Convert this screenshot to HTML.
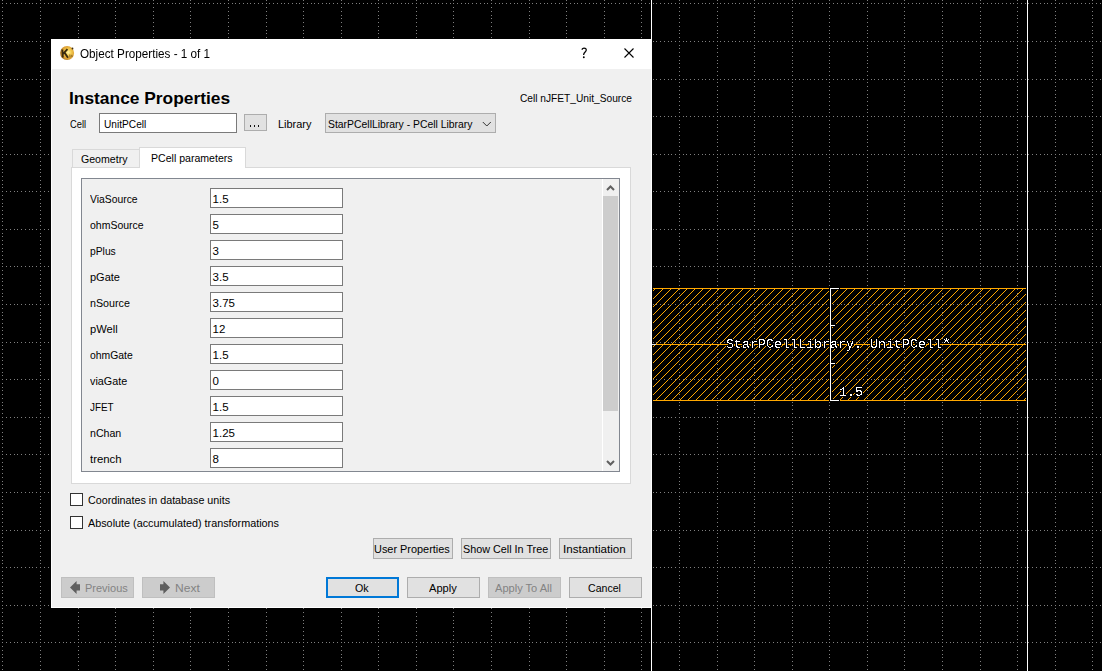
<!DOCTYPE html>
<html><head><meta charset="utf-8">
<style>
html,body{margin:0;padding:0;width:1102px;height:671px;overflow:hidden;background:#000;}
body{position:relative;font-family:"Liberation Sans",sans-serif;}
#cv{position:absolute;left:0;top:0;}
.a{position:absolute;box-sizing:border-box;}
.t{position:absolute;white-space:pre;font-size:12px;line-height:1;color:#000;transform-origin:0 0;}
.v{position:absolute;white-space:pre;font-size:11.5px;line-height:1;color:#000;}
.fld{position:absolute;box-sizing:border-box;background:#fff;border:1px solid #7a7a7a;}
.btn{position:absolute;box-sizing:border-box;background:#e1e1e1;border:1px solid #adadad;}
.dis{position:absolute;box-sizing:border-box;background:#cccccc;border:1px solid #bfbfbf;}
.cb{position:absolute;box-sizing:border-box;background:#fff;border:1px solid #333;width:13px;height:13px;}
</style></head><body>
<div class="a" style="left:0;top:0;width:1102px;height:671px;background-image:repeating-linear-gradient(90deg,transparent 0,transparent 2.9px,rgba(128,128,128,.27) 2.9px,rgba(128,128,128,.27) 3.9px,transparent 3.9px,transparent 37.585px),repeating-linear-gradient(180deg,transparent 0,transparent 3.8px,rgba(128,128,128,.27) 3.8px,rgba(128,128,128,.27) 4.8px,transparent 4.8px,transparent 37.585px);"></div>
<div class="a" style="left:653px;top:288px;width:373px;height:113px;border-top:1px solid #ffa800;border-bottom:1px solid #ffa800;background-image:repeating-linear-gradient(135deg,rgba(255,168,0,.9) 0,rgba(255,168,0,.9) 1px,transparent 1px,transparent 5.657px);"></div>
<div class="a" style="left:653px;top:344px;width:373px;height:1px;background:#ffa800"></div>
<div class="a" style="left:651px;top:0;width:1px;height:671px;background:#fff"></div>
<div class="a" style="left:1027px;top:0;width:1px;height:671px;background:#fff"></div>
<div class="a" style="left:829px;top:287px;width:3px;height:115px;background:#000"></div>
<div class="a" style="left:830px;top:288px;width:1px;height:113px;background:#fff"></div>
<div class="a" style="left:830px;top:288px;width:9px;height:1px;background:#fff"></div>
<div class="a" style="left:830px;top:400px;width:9px;height:1px;background:#fff"></div>
<div class="a" style="left:830px;top:325px;width:5px;height:1px;background:#fff"></div>
<div class="a" style="left:830px;top:363px;width:5px;height:1px;background:#fff"></div>
<span class="a" style="left:726px;top:336px;font:13.33px 'Liberation Mono',monospace;line-height:1;color:#fff;white-space:pre;text-shadow:0 0 1px #000,0 0 1px #000">StarPCellLibrary. UnitPCell*</span>
<span class="a" style="left:839px;top:384px;font:13.33px 'Liberation Mono',monospace;line-height:1;color:#fff;white-space:pre;text-shadow:0 0 1px #000,0 0 1px #000">1.5</span>
<canvas id="cv" width="1102" height="671"></canvas>

<div class="a" style="left:51px;top:39px;width:601px;height:569px;background:#fff;"></div>
<div class="a" style="left:52px;top:69px;width:599px;height:538px;background:#f0f0f0;"></div>
<!-- icon -->
<svg class="a" style="left:59px;top:45px" width="16" height="16" viewBox="0 0 16 16">
<defs><radialGradient id="gd" cx="0.58" cy="0.45" r="0.6"><stop offset="0" stop-color="#fff7b0"/><stop offset="0.35" stop-color="#f5cc50"/><stop offset="0.8" stop-color="#d99a30"/><stop offset="1" stop-color="#a06a20"/></radialGradient></defs>
<circle cx="8.1" cy="8" r="7" fill="url(#gd)"/>
<path d="M3.3 4.5 L3.8 12.5 M4 8.8 L8.5 4.2 M5.8 8 L9 12.8" stroke="#3a2a10" stroke-width="1.9" fill="none"/>
<path d="M10.8 9.5 L11 12.5 M12.8 9.8 L13 12" stroke="#5a4010" stroke-width="0.9" fill="none" opacity="0.8"/>
<circle cx="13.5" cy="3.5" r="0.9" fill="#3a2a10"/>
</svg>
<!-- ? and X -->
<svg class="a" style="left:620px;top:44px" width="18" height="18" viewBox="0 0 18 18"><path d="M4.5 4.5 L13.5 13.5 M13.5 4.5 L4.5 13.5" stroke="#000" stroke-width="1.1" fill="none"/></svg>
<svg class="a" style="left:0;top:0" width="600" height="70"><path d="M581.8 49.6 C582.5 48.4 584 48 585.2 48.4 C586.6 48.9 586.5 50.6 585.5 51.6 C584.5 52.5 583.6 53.2 583.6 55" stroke="#000" stroke-width="1.25" fill="none"/><circle cx="583.8" cy="57.3" r="0.95" fill="#000"/></svg>
<!-- cell input -->
<div class="fld" style="left:99px;top:113px;width:138px;height:20px;"></div>
<div class="btn" style="left:244px;top:114px;width:23px;height:17px;"></div>
<div class="a" style="left:250px;top:125px;width:1px;height:2px;background:#111"></div><div class="a" style="left:254px;top:125px;width:1px;height:2px;background:#111"></div><div class="a" style="left:258px;top:125px;width:1px;height:2px;background:#111"></div>
<div class="btn" style="left:325px;top:113px;width:171px;height:20px;"></div>
<svg class="a" style="left:482px;top:120px" width="10" height="8" viewBox="0 0 10 8"><path d="M0.8 2 L4.8 6 L8.8 2" stroke="#333" stroke-width="1" fill="none"/></svg>
<!-- tabs -->
<div class="a" style="left:72px;top:149px;width:68px;height:19px;background:#f0f0f0;border:1px solid #d9d9d9;"></div>
<div class="a" style="left:71px;top:167px;width:560px;height:317px;background:#fff;border:1px solid #d9d9d9;"></div>
<div class="a" style="left:139px;top:147px;width:107px;height:21px;background:#fff;border:1px solid #d9d9d9;border-bottom:none;"></div>
<!-- scroll frame -->
<div class="a" style="left:81px;top:178px;width:539px;height:294px;background:#f0f0f0;border:1px solid #828790;"></div>
<div class="a" style="left:602px;top:179px;width:1px;height:292px;background:#fff;"></div>
<div class="a" style="left:603px;top:196px;width:15px;height:215px;background:#cdcdcd;"></div>
<svg class="a" style="left:603px;top:180px" width="15" height="17" viewBox="0 0 15 17"><path d="M4 10 L7.5 6.5 L11 10" stroke="#606060" stroke-width="2" fill="none"/></svg>
<svg class="a" style="left:603px;top:454px" width="15" height="17" viewBox="0 0 15 17"><path d="M4 7 L7.5 10.5 L11 7" stroke="#606060" stroke-width="2" fill="none"/></svg>

<div class="fld" style="left:210px;top:188px;width:133px;height:20px;"></div>
<span class="v" style="left:212.6px;top:194px;">1.5</span>
<div class="fld" style="left:210px;top:214px;width:133px;height:20px;"></div>
<span class="v" style="left:212.6px;top:220px;">5</span>
<div class="fld" style="left:210px;top:240px;width:133px;height:20px;"></div>
<span class="v" style="left:212.6px;top:246px;">3</span>
<div class="fld" style="left:210px;top:266px;width:133px;height:20px;"></div>
<span class="v" style="left:212.6px;top:272px;">3.5</span>
<div class="fld" style="left:210px;top:292px;width:133px;height:20px;"></div>
<span class="v" style="left:212.6px;top:298px;">3.75</span>
<div class="fld" style="left:210px;top:318px;width:133px;height:20px;"></div>
<span class="v" style="left:212.6px;top:324px;">12</span>
<div class="fld" style="left:210px;top:344px;width:133px;height:20px;"></div>
<span class="v" style="left:212.6px;top:350px;">1.5</span>
<div class="fld" style="left:210px;top:370px;width:133px;height:20px;"></div>
<span class="v" style="left:212.6px;top:376px;">0</span>
<div class="fld" style="left:210px;top:396px;width:133px;height:20px;"></div>
<span class="v" style="left:212.6px;top:402px;">1.5</span>
<div class="fld" style="left:210px;top:422px;width:133px;height:20px;"></div>
<span class="v" style="left:212.6px;top:428px;">1.25</span>
<div class="fld" style="left:210px;top:448px;width:133px;height:20px;"></div>
<span class="v" style="left:212.6px;top:454px;">8</span>
<div class="cb" style="left:70px;top:493px;"></div>
<div class="cb" style="left:70px;top:516px;"></div>
<div class="btn" style="left:373px;top:538px;width:80px;height:21px;"></div>
<div class="btn" style="left:461px;top:538px;width:90px;height:21px;"></div>
<div class="btn" style="left:559px;top:538px;width:73px;height:21px;"></div>
<div class="dis" style="left:61px;top:577px;width:73px;height:21px;"></div>
<div class="dis" style="left:142px;top:577px;width:73px;height:21px;"></div>
<div class="a" style="left:326px;top:577px;width:73px;height:21px;background:#e1e1e1;border:2px solid #0078d7;"></div>
<div class="btn" style="left:407px;top:577px;width:73px;height:21px;"></div>
<div class="dis" style="left:488px;top:577px;width:73px;height:21px;"></div>
<div class="btn" style="left:569px;top:577px;width:73px;height:21px;"></div>
<svg class="a" style="left:70px;top:580px" width="11" height="15" viewBox="0 0 11 15"><path d="M0 7.4 L6.6 0.9 L6.6 4.2 L10 4.2 L10 10.6 L6.6 10.6 L6.6 13.9 Z" fill="#5f5f5f"/></svg>
<svg class="a" style="left:160px;top:580px" width="11" height="15" viewBox="0 0 11 15"><path d="M10 7.4 L3.4 0.9 L3.4 4.2 L0 4.2 L0 10.6 L3.4 10.6 L3.4 13.9 Z" fill="#5f5f5f"/></svg>
<span class="t" id="tx0" style="left:79.50px;top:47.60px;font-size:12px;transform:scaleX(0.9752);">Object Properties - 1 of 1</span>
<span class="t" id="tx1" style="left:68.50px;top:89.85px;font-size:17px;transform:scaleX(1.0215);font-weight:bold">Instance Properties</span>
<span class="t" id="tx2" style="left:519.50px;top:93.38px;font-size:11px;transform:scaleX(0.9248);">Cell nJFET_Unit_Source</span>
<span class="t" id="tx3" style="left:69.50px;top:119.38px;font-size:11px;transform:scaleX(0.8461);">Cell</span>
<span class="t" id="tx4" style="left:103.50px;top:119.38px;font-size:11px;transform:scaleX(0.9221);">UnitPCell</span>
<span class="t" id="tx5" style="left:277.50px;top:119.38px;font-size:11px;transform:scaleX(0.9950);">Library</span>
<span class="t" id="tx6" style="left:327.50px;top:119.38px;font-size:11px;transform:scaleX(0.9458);">StarPCellLibrary - PCell Library</span>
<span class="t" id="tx7" style="left:80.50px;top:154.38px;font-size:11px;transform:scaleX(0.9618);">Geometry</span>
<span class="t" id="tx8" style="left:150.50px;top:153.38px;font-size:11px;transform:scaleX(0.9604);">PCell parameters</span>
<span class="t" id="tx9" style="left:87.50px;top:495.38px;font-size:11px;transform:scaleX(0.9757);">Coordinates in database units</span>
<span class="t" id="tx10" style="left:87.50px;top:518.38px;font-size:11px;transform:scaleX(0.9824);">Absolute (accumulated) transformations</span>
<span class="t" id="tx11" style="left:373.50px;top:544.38px;font-size:11px;transform:scaleX(0.9919);">User Properties</span>
<span class="t" id="tx12" style="left:462.50px;top:544.38px;font-size:11px;transform:scaleX(0.9811);">Show Cell In Tree</span>
<span class="t" id="tx13" style="left:562.50px;top:544.38px;font-size:11px;transform:scaleX(1.0567);">Instantiation</span>
<span class="t" id="tx14" style="left:84.50px;top:583.38px;font-size:11px;transform:scaleX(0.9987);color:#838383">Previous</span>
<span class="t" id="tx15" style="left:174.50px;top:583.38px;font-size:11px;transform:scaleX(1.0945);color:#838383">Next</span>
<span class="t" id="tx16" style="left:354.50px;top:583.38px;font-size:11px;transform:scaleX(0.9709);">Ok</span>
<span class="t" id="tx17" style="left:428.50px;top:583.38px;font-size:11px;transform:scaleX(1.0093);">Apply</span>
<span class="t" id="tx18" style="left:494.50px;top:583.38px;font-size:11px;transform:scaleX(1.0065);color:#838383">Apply To All</span>
<span class="t" id="tx19" style="left:587.50px;top:583.38px;font-size:11px;transform:scaleX(0.9615);">Cancel</span>
<span class="t" id="tx20" style="left:89.50px;top:194.38px;font-size:11px;transform:scaleX(0.9411);">ViaSource</span>
<span class="t" id="tx21" style="left:89.50px;top:220.38px;font-size:11px;transform:scaleX(0.9543);">ohmSource</span>
<span class="t" id="tx22" style="left:89.50px;top:246.38px;font-size:11px;transform:scaleX(0.9364);">pPlus</span>
<span class="t" id="tx23" style="left:89.50px;top:272.38px;font-size:11px;transform:scaleX(1.0011);">pGate</span>
<span class="t" id="tx24" style="left:89.50px;top:298.38px;font-size:11px;transform:scaleX(0.9736);">nSource</span>
<span class="t" id="tx25" style="left:89.50px;top:324.38px;font-size:11px;transform:scaleX(1.0139);">pWell</span>
<span class="t" id="tx26" style="left:89.50px;top:350.38px;font-size:11px;transform:scaleX(0.9442);">ohmGate</span>
<span class="t" id="tx27" style="left:89.50px;top:376.38px;font-size:11px;transform:scaleX(0.9801);">viaGate</span>
<span class="t" id="tx28" style="left:89.50px;top:402.38px;font-size:11px;transform:scaleX(0.9000);">JFET</span>
<span class="t" id="tx29" style="left:89.50px;top:428.38px;font-size:11px;transform:scaleX(0.9627);">nChan</span>
<span class="t" id="tx30" style="left:89.50px;top:454.38px;font-size:11px;transform:scaleX(1.0348);">trench</span>
<script>
(function(){
var c=document.getElementById('cv'),g=c.getContext('2d');
var W=1102,H=671;
g.fillStyle='#000';g.fillRect(0,0,W,H);
var img=g.getImageData(0,0,W,H),d=img.data;
function px(x,y,r,gg,b){if(x<0||y<0||x>=W||y>=H)return;var i=(y*W+x)*4;d[i]=r;d[i+1]=gg;d[i+2]=b;d[i+3]=255;}
var OR=255,OG=168,OB=0;
var X0=653,X1=1025,Y0=288,Y1=400;
for(var y=Y0;y<=Y1;y++)for(var x=X0;x<=X1;x++){if((x+y)%8==7)px(x,y,OR,OG,OB);}
for(var x=X0;x<=X1;x++){px(x,Y0,OR,OG,OB);px(x,Y1,OR,OG,OB);px(x,344,OR,OG,OB);}
var p=3.7585,ox=2.92,oy=3.83,GR=128;
for(var k=0;k*p+ox<W;k+=10){var gx=Math.floor(ox+k*p);
  for(var j=-1;j*p+oy<H;j++){var gy=Math.floor(oy+j*p);px(gx,gy,GR,GR,GR);}}
for(var j=0;j*p+oy<H;j+=10){var gy=Math.floor(oy+j*p);
  for(var k=0;k*p+ox<W;k++){var gx=Math.floor(ox+k*p);px(gx,gy,GR,GR,GR);}}
// white overlay mask (ruler + texts) with halo
var m=document.createElement('canvas');m.width=W;m.height=H;var mg=m.getContext('2d');
mg.fillStyle='#fff';
mg.fillRect(830,288,1,113);
mg.fillRect(830,288,9,1);mg.fillRect(830,400,9,1);
mg.fillRect(830,325,5,1);mg.fillRect(830,363,5,1);
mg.font='13.33px "Liberation Mono"';
mg.fillText('StarPCellLibrary. UnitPCell',726,347.5);
mg.fillText('1.5',839,395.5);
var ast=[[946,338],[944,339],[946,339],[948,339],[945,340],[946,340],[947,340],[945,341],[947,341],[944,342],[948,342]];for(var q=0;q<ast.length;q++)mg.fillRect(ast[q][0],ast[q][1],1,1);
var md=mg.getImageData(0,0,W,H).data;
var on=new Uint8Array(W*H);
for(var i=0;i<W*H;i++){if(md[i*4+3]>150)on[i]=1;}
var RX0=640,RX1=1040,RY0=280,RY1=410;
for(var y=RY0;y<RY1;y++)for(var x=RX0;x<RX1;x++){
  if(on[y*W+x])continue;
  var nb=0;for(var dy=-1;dy<=1&&!nb;dy++)for(var dx=-1;dx<=1;dx++){if(on[(y+dy)*W+x+dx]){nb=1;break;}}
  if(nb)px(x,y,0,0,0);
}
for(var y=RY0;y<RY1;y++)for(var x=RX0;x<RX1;x++){if(on[y*W+x])px(x,y,255,255,255);}
for(var y=0;y<H;y++){px(651,y,255,255,255);px(1027,y,255,255,255);}
for(var x=652;x<=655;x++)px(x,344,215,222,235);
g.putImageData(img,0,0);
})();
</script>

</body></html>
